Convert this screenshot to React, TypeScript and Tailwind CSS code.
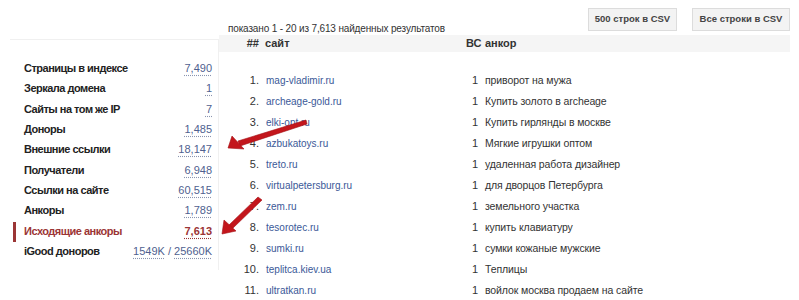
import React from "react";

const stats: { label: string; value: React.ReactNode; active?: boolean }[] = [
  { label: "Страницы в индексе", value: "7,490" },
  { label: "Зеркала домена", value: "1" },
  { label: "Сайты на том же IP", value: "7" },
  { label: "Доноры", value: "1,485" },
  { label: "Внешние ссылки", value: "18,147" },
  { label: "Получатели", value: "6,948" },
  { label: "Ссылки на сайте", value: "60,515" },
  { label: "Анкоры", value: "1,789" },
  { label: "Исходящие анкоры", value: "7,613", active: true },
];

const rows = [
  ["mag-vladimir.ru", "приворот на мужа"],
  ["archeage-gold.ru", "Купить золото в archeage"],
  ["elki-opt.ru", "Купить гирлянды в москве"],
  ["azbukatoys.ru", "Мягкие игрушки оптом"],
  ["treto.ru", "удаленная работа дизайнер"],
  ["virtualpetersburg.ru", "для дворцов Петербурга"],
  ["zem.ru", "земельного участка"],
  ["tesorotec.ru", "купить клавиатуру"],
  ["sumki.ru", "сумки кожаные мужские"],
  ["teplitca.kiev.ua", "Теплицы"],
  ["ultratkan.ru", "войлок москва продаем на сайте"],
];

const num = "underline decoration-dotted decoration-[#8a94b0] underline-offset-[3px]";

export default function App() {
  return (
    <div
      className="relative w-[799px] h-[300px] overflow-hidden bg-white text-[#222]"
      style={{ fontFamily: '"Liberation Sans", Arial, sans-serif' }}
    >
      <div className="flex">
        {/* left panel */}
        <div className="w-[219px] pt-[39px] pl-[10px]">
          <div className="border-t border-[#f0f0f0] border-r h-[231px] pt-[18px] pr-[6px]">
            {stats.map((s) => (
              <div key={s.label} className="relative flex items-center justify-between h-[20.33px] pl-[14px]">
                {s.active && <div className="absolute left-[3px] top-[1px] w-[3px] h-[20px] bg-[#9b3535]" />}
                <span className={`text-[11px] tracking-[-0.5px] font-bold ${s.active ? "text-[#9b3535]" : "text-[#222]"}`}>{s.label}</span>
                <span
                  className={`text-[11px] ${num} ${s.active ? "font-bold text-[#9b3535] decoration-[#9b3535]" : "text-[#4f5f8f]"}`}
                >
                  {s.value}
                </span>
              </div>
            ))}
            <div className="flex items-center justify-between h-[20.33px] pl-[14px]">
              <span className="text-[11px] tracking-[-0.5px] font-bold">iGood доноров</span>
              <span className="text-[11px] text-[#4f5f8f]">
                <span className={num}>1549K</span> / <span className={num}>25660K</span>
              </span>
            </div>
          </div>
        </div>

        {/* right panel */}
        <div className="flex-1">
          <div className="h-[35px] flex items-start">
            <div className="pl-[9px] pt-[21px] text-[10px] tracking-[-0.15px] text-[#333]">показано 1 - 20 из 7,613 найденных результатов</div>
            <div className="ml-auto mr-[9px] mt-[8px] flex gap-[15px]">
              <div className="h-[23px] w-[89px] flex items-center justify-center bg-[#f3f3f3] border border-[#dcdcdc] text-[9.5px] font-bold text-[#444]">
                500 строк в CSV
              </div>
              <div className="h-[23px] w-[98px] flex items-center justify-center bg-[#f3f3f3] border border-[#dcdcdc] text-[9.5px] font-bold text-[#444]">
                Все строки в CSV
              </div>
            </div>
          </div>
          <div className="mr-[9px] h-[17px] bg-[#f5f5f5] grid grid-cols-[40px_207px_14px_1fr] items-center text-[11px] font-bold text-[#333]">
            <div className="text-right">##</div>
            <div className="pl-[6px]">сайт</div>
            <div className="text-right">ВС</div>
            <div className="pl-[5px]">анкор</div>
          </div>
          <div className="pt-[18px]">
            {rows.map((r, i) => (
              <div key={i} className="grid grid-cols-[40px_207px_14px_1fr] items-center h-[21px] text-[11px]">
                <div className="text-right text-[#333]">{i + 1}.</div>
                <div className="pl-[7px] text-[10px] text-[#3b5998]">{r[0]}</div>
                <div className="text-right pr-[2px] text-[#333]">1</div>
                <div className="pl-[5px] text-[10.5px] tracking-[-0.1px] text-[#333]">{r[1]}</div>
              </div>
            ))}
          </div>
        </div>
      </div>

      {/* red arrows overlay */}
      <svg className="absolute left-0 top-0 pointer-events-none" width="799" height="300">
        <g fill="#c3161c" stroke="#a51015" strokeWidth="0.6">
          <polygon points="306,120 307,124 240,146 238,141" />
          <polygon points="228,148 232,136 244,149" />
          <polygon points="258,197 262,200 232,229 229,225" />
          <polygon points="222,234 224,220 236,231" />
        </g>
      </svg>
    </div>
  );
}
